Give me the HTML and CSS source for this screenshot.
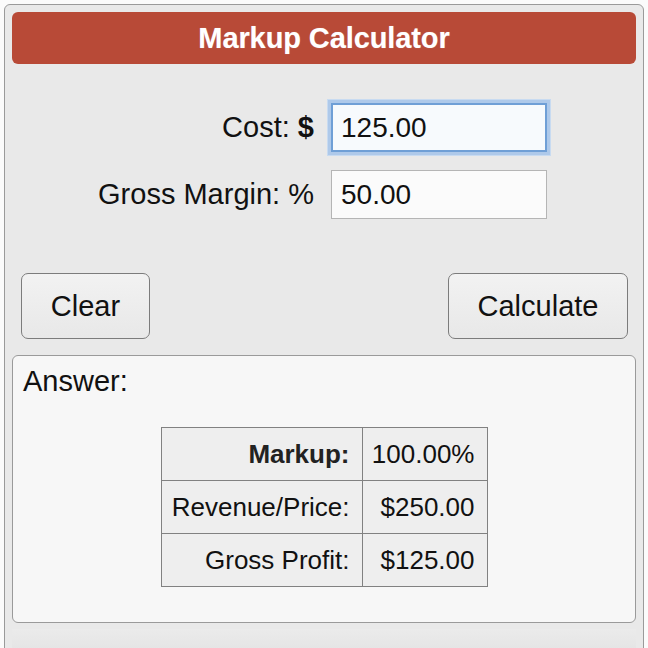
FILE: index.html
```html
<!DOCTYPE html>
<html>
<head>
<meta charset="utf-8">
<title>Markup Calculator</title>
<link rel="stylesheet" href="styles.css">
</head>
<body>
<div class="calc">
  <div class="header">Markup Calculator</div>
  <div class="form">
    <label class="label" for="cost">Cost: <b>$</b></label>
    <input class="field focused" id="cost" type="text" value="125.00">
    <label class="label" for="margin">Gross Margin: %</label>
    <input class="field" id="margin" type="text" value="50.00">
  </div>
  <div class="buttons">
    <button class="btn btn-clear">Clear</button>
    <button class="btn btn-calc">Calculate</button>
  </div>
  <div class="answer">
    <div class="answer-title">Answer:</div>
    <table class="results">
      <tr><th>Markup:</th><td>100.00%</td></tr>
      <tr><td class="key">Revenue/Price:</td><td>$250.00</td></tr>
      <tr><td class="key">Gross Profit:</td><td>$125.00</td></tr>
    </table>
  </div>
  <div class="footer"></div>
</div>
</body>
</html>
```
FILE: styles.css
```css
html, body {
  margin: 0;
  padding: 0;
  background: #fbfbfb;
  overflow: hidden;
}
body {
  font-family: "Liberation Sans", Arial, Helvetica, sans-serif;
  color: #111;
}
.calc {
  box-sizing: border-box;
  width: 640px;
  margin: 4px 0 0 4px;
  padding: 7px 7px 0 7px;
  background: #e9e9e9;
  border: 1px solid #9a9a9a;
  border-radius: 6px;
}
.header {
  height: 52px;
  line-height: 52px;
  background: #b84a37;
  border-radius: 6px;
  color: #fff;
  font-weight: bold;
  font-size: 29px;
  text-align: center;
  letter-spacing: -0.1px;
  text-shadow: 0 0 1px rgba(255,255,255,0.4);
}
.form {
  display: grid;
  grid-template-columns: 302px 216px;
  column-gap: 17px;
  row-gap: 18px;
  margin-top: 39px;
  align-items: center;
}
.label {
  text-align: right;
  font-size: 29px;
  color: #111;
}
.field {
  box-sizing: border-box;
  width: 216px;
  height: 49px;
  margin: 0;
  padding: 0 9px;
  font-family: "Liberation Sans", Arial, sans-serif;
  font-size: 28px;
  color: #111;
  background: #fbfbfb;
  border: 1px solid #b5b5b5;
  outline: none;
}
.field.focused {
  background: #f7fafd;
  border: 2px solid #6f9fd6;
  padding: 0 8px;
  box-shadow: 0 0 0 3px #aec9ea, 0 0 0 4px #c8dbf1;
}
.buttons {
  display: flex;
  justify-content: space-between;
  padding: 0 8px 0 9px;
  margin-top: 54px;
}
.btn {
  box-sizing: border-box;
  height: 66px;
  font-family: "Liberation Sans", Arial, sans-serif;
  font-size: 29px;
  color: #111;
  background: linear-gradient(#f2f2f2, #e8e8e8);
  border: 1px solid #7c7c7c;
  border-radius: 7px;
  padding: 0;
}
.btn-clear { width: 129px; }
.btn-calc { width: 180px; }
.answer {
  margin-top: 16px;
  height: 268px;
  box-sizing: border-box;
  background: #f7f7f7;
  border: 1px solid #9a9a9a;
  border-radius: 6px;
  padding: 9px 10px 0 10px;
}
.answer-title {
  font-size: 29px;
  line-height: 32px;
  color: #111;
}
.results {
  margin: 30px auto 0 auto;
  border-collapse: collapse;
  table-layout: fixed;
  width: 327px;
  font-size: 26px;
}
.results th, .results td {
  height: 52px;
  padding: 0 12px 0 0;
  border: 1px solid #818181;
  background: #eeeeee;
  text-align: right;
  color: #111;
}
.results th, .results .key { width: 188px; }
.results th { font-weight: bold; color: #222; }
.footer {
  height: 30px;
  margin-top: 6px;
  background: linear-gradient(#ebebeb, #e2e2e2);
}
```
